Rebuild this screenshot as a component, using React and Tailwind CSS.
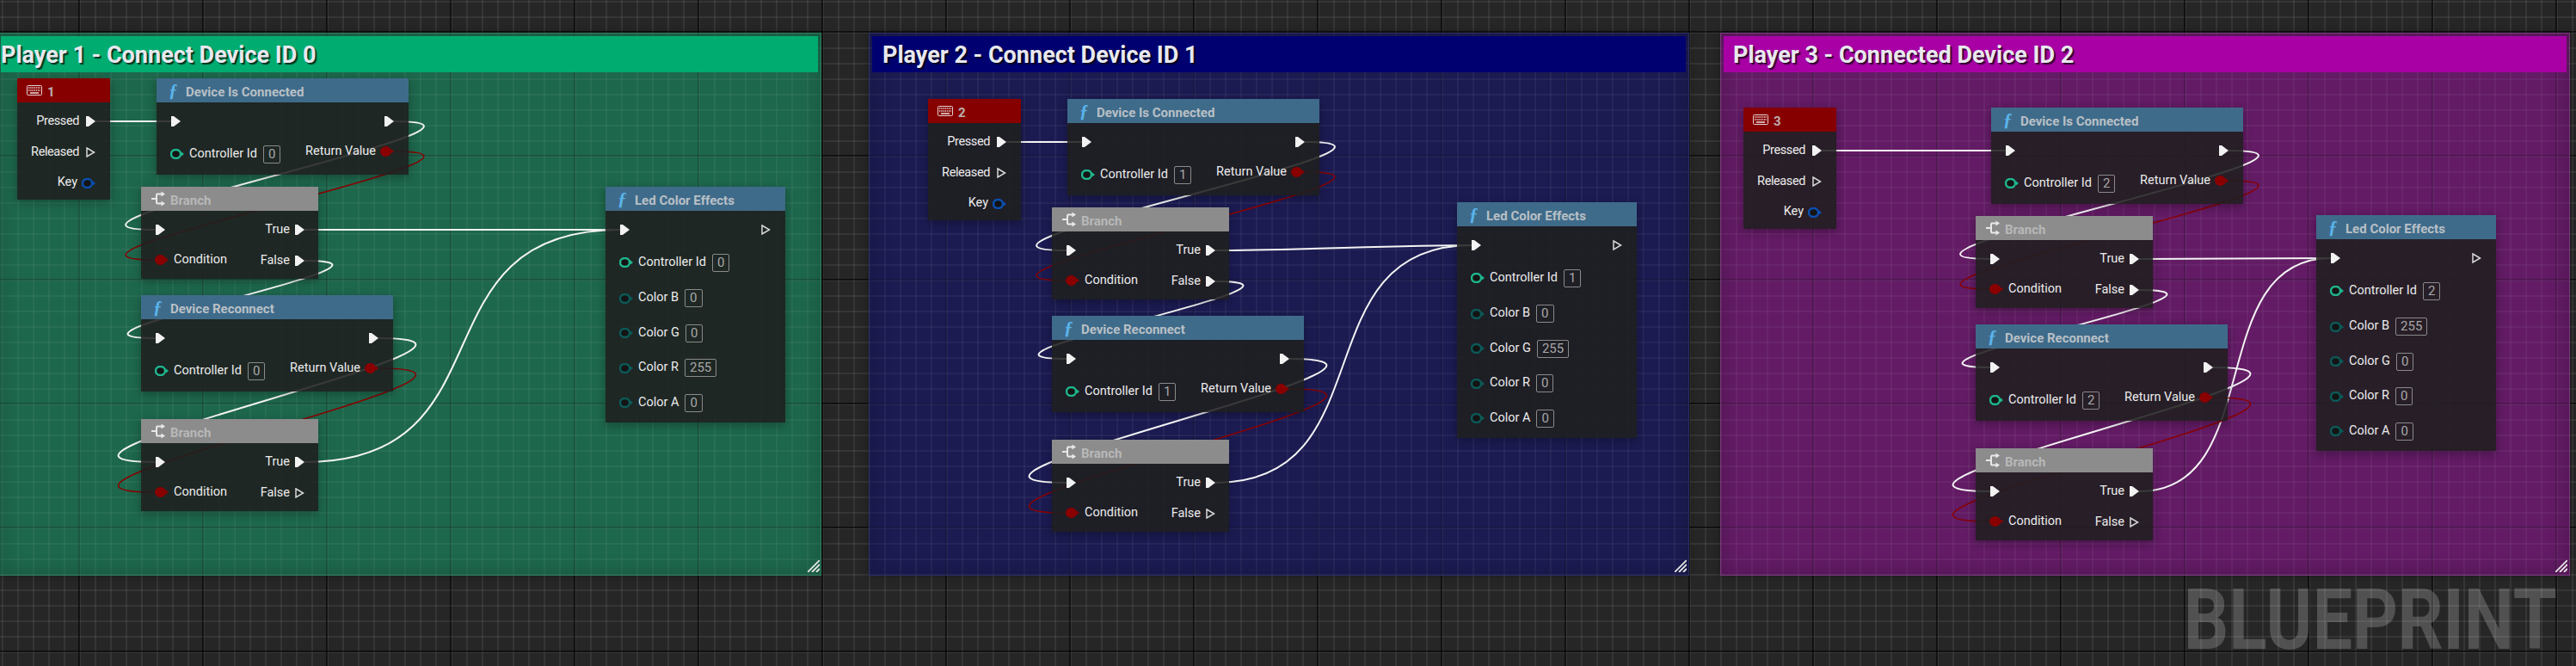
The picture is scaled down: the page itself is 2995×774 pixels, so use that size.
import React from "react";

// grid lines sit on fixed backgrounds so canvas and comment boxes stay lined up
const canvasGrid =
    "bg-fixed bg-[#262626] [background-image:linear-gradient(to_right,rgba(0,0,0,0.6)_2px,transparent_2px),linear-gradient(to_bottom,rgba(0,0,0,0.6)_2px,transparent_2px),linear-gradient(to_right,rgba(255,255,255,0.07)_2px,transparent_2px),linear-gradient(to_bottom,rgba(255,255,255,0.07)_2px,transparent_2px)] [background-size:144px_144px,144px_144px,18px_18px,18px_18px] [background-position:91px_36px,91px_36px,2px_1px,2px_1px]";
const panelGrid =
    "bg-fixed [background-image:linear-gradient(to_right,rgba(0,0,0,0.18)_2px,transparent_2px),linear-gradient(to_bottom,rgba(0,0,0,0.18)_2px,transparent_2px),linear-gradient(to_right,rgba(255,255,255,0.045)_2px,transparent_2px),linear-gradient(to_bottom,rgba(255,255,255,0.045)_2px,transparent_2px)] [background-size:144px_144px,144px_144px,18px_18px,18px_18px] [background-position:91px_36px,91px_36px,2px_1px,2px_1px]";

const graphs = [
    {
        id: 0,
        title: "Player 1 - Connect Device ID 0",
        box: "left-[-3px] w-[958px] bg-[#1d674c] border-[#2f7d61]",
        bar: "bg-[#00ac6f] pl-0",
        key: "1",
        colors: ["0", "0", "255", "0"],
        nodes: { key: [20, 91], dic: [182, 91], b1: [164, 217], dr: [164, 343], b2: [164, 487], led: [704, 217] },
        hatch: [939, 651],
    },
    {
        id: 1,
        title: "Player 2 - Connect Device ID 1",
        box: "left-[1010px] w-[954px] bg-[#1b1b52] border-[#2e2e66]",
        bar: "bg-[#000070] pl-[12px]",
        key: "2",
        colors: ["0", "255", "0", "0"],
        nodes: { key: [1079, 115], dic: [1241, 115], b1: [1223, 241], dr: [1223, 367], b2: [1223, 511], led: [1694, 235] },
        hatch: [1947, 651],
    },
    {
        id: 2,
        title: "Player 3 - Connected Device ID 2",
        box: "left-[2000px] w-[988px] bg-[#621b64] border-[#7a3a7c]",
        bar: "bg-[#a800a5] pl-[11px]",
        key: "3",
        colors: ["255", "0", "0", "0"],
        nodes: { key: [2027, 125], dic: [2315, 125], b1: [2297, 251], dr: [2297, 377], b2: [2297, 521], led: [2693, 250] },
        hatch: [2971, 651],
    },
];

const ExecPin = ({ hollow }) => (
    <svg width="11" height="12" viewBox="0 0 11 12" className="shrink-0">
        {hollow ? (
            <polygon points="1,1 9.5,6 1,11" fill="none" stroke="#d8d8d8" strokeWidth="1.5" />
        ) : (
            <polygon points="0,0 3,0 11,6 3,12 0,12" fill="#f2f2f2" />
        )}
    </svg>
);

const DataPin = ({ color, filled }) => (
    <svg width="16" height="12" viewBox="0 0 16 12" className="shrink-0">
        <polygon points="13,3.5 16,6 13,8.500" fill={color} />
        <ellipse
            cx="6.500"
            cy="6"
            rx={filled ? 6.5 : 5.5}
            ry={filled ? 6 : 5}
            fill={filled ? color : "#141414"}
            stroke={filled ? "none" : color}
            strokeWidth="2.500"
        />
    </svg>
);

const KeyboardIcon = () => (
    <svg width="18" height="12" viewBox="0 0 18 12" className="shrink-0">
        <rect x="0.500" y="0.500" width="17" height="11" rx="1" fill="none" stroke="#e4d4d4" />
        <path d="M2 3h14M2 6h14" stroke="#e4d4d4" strokeWidth="1.600" strokeDasharray="1.400 0.800" />
        <path d="M4 9h10" stroke="#e4d4d4" strokeWidth="1.600" />
    </svg>
);

const BranchIcon = () => (
    <svg width="16" height="18" viewBox="0 0 16 18" className="shrink-0">
        <path d="M0 9h6M6 3.500v11M6 3.500h6M6 14.500h6" fill="none" stroke="#e8e8e8" strokeWidth="2" />
        <path d="M11.500 0.500L16 3.500L11.500 6.500ZM11.500 11.500L16 14.500L11.500 17.500Z" fill="#e8e8e8" />
    </svg>
);

const FuncIcon = () => (
    <span className="w-[20px] shrink-0 font-['Liberation_Serif'] text-[21px] italic leading-none text-[#5ab4ea]">ƒ</span>
);

const ValueBox = ({ value }) => (
    <span className="flex h-[21px] min-w-[20px] items-center justify-center rounded-[2px] border border-[#8a8a8a] px-[5px] text-[15px] leading-none text-[#a8a8a8]">
        {value}
    </span>
);

const Node = ({ pos, width, header, icon, title, titleColor, children }) => (
    <div
        className="absolute z-20 font-['Roboto'] text-[14.500px] leading-none text-[#ececec] shadow-[0_3px_10px_rgba(0,0,0,0.3)]"
        style={{ left: pos[0], top: pos[1], width }}
    >
        <div className={`flex h-[28px] items-center font-bold ${header}`}>
            {icon}
            <span className={`pt-[4px] text-[15px] ${titleColor}`}>{title}</span>
        </div>
        <div className="bg-[rgba(31,31,31,0.88)]">{children}</div>
    </div>
);

const FunctionNode = ({ pos, title, id }) => (
    <Node
        pos={pos}
        width={293}
        header="bg-[#3f6b8a] pl-[14px]"
        icon={<FuncIcon />}
        title={title}
        titleColor="text-[#b9c0c6]"
    >
        <div className="flex h-[44px] items-center justify-between px-[17px]">
            <ExecPin />
            <ExecPin />
        </div>
        <div className="flex h-[32px] items-center justify-between pl-[16px] pr-[17px]">
            <div className="flex items-center">
                <DataPin color="#1fb58c" />
                <span className="ml-[6px]">Controller Id</span>
                <span className="ml-[7px]">
                    <ValueBox value={id} />
                </span>
            </div>
            <div className="mb-[6px] flex items-center gap-[5px]">
                <span>Return Value</span>
                <DataPin color="#8a0000" filled />
            </div>
        </div>
        <div className="h-[8px]" />
    </Node>
);

const BranchNode = ({ pos, falseHollow }) => (
    <Node
        pos={pos}
        width={206}
        header="bg-[#8c8c8c] pl-[12px] gap-[6px]"
        icon={<BranchIcon />}
        title="Branch"
        titleColor="text-[#b8b8b8]"
    >
        <div className="flex h-[44px] items-center justify-between pl-[17px] pr-[16px]">
            <ExecPin />
            <div className="flex items-center gap-[6px]">
                <span>True</span>
                <ExecPin />
            </div>
        </div>
        <div className="flex h-[26px] items-center justify-between pl-[16px] pr-[16px]">
            <div className="flex items-center gap-[6px]">
                <DataPin color="#8a0000" filled />
                <span>Condition</span>
            </div>
            <div className="mt-[2px] flex items-center gap-[6px]">
                <span>False</span>
                <ExecPin hollow={falseHollow} />
            </div>
        </div>
        <div className="h-[9px]" />
    </Node>
);

const KeyNode = ({ pos, label }) => (
    <Node
        pos={pos}
        width={108}
        header="bg-[#870000] pl-[11px] gap-[6px]"
        icon={<KeyboardIcon />}
        title={label}
        titleColor="text-[#bdb0b0]"
    >
        <div className="flex flex-col items-end pt-[4px] pr-[17px]">
            <div className="flex h-[36px] items-center gap-[8px]">
                <span className="tracking-[-0.4px]">Pressed</span>
                <ExecPin />
            </div>
            <div className="flex h-[36px] items-center gap-[8px]">
                <span className="tracking-[-0.4px]">Released</span>
                <ExecPin hollow />
            </div>
            <div className="flex h-[35px] items-center gap-[5px]">
                <span>Key</span>
                <DataPin color="#0b4fb0" />
            </div>
            <div className="h-[2px]" />
        </div>
    </Node>
);

const LedNode = ({ pos, id, colors }) => {
    const rows = [
        { name: "Color B", value: colors[0], height: "h-[41px]" },
        { name: "Color G", value: colors[1], height: "h-[40px]" },
        { name: "Color R", value: colors[2], height: "h-[41px]" },
        { name: "Color A", value: colors[3], height: "h-[40px]" },
    ];
    return (
        <Node
            pos={pos}
            width={209}
            header="bg-[#3f6b8a] pl-[14px]"
            icon={<FuncIcon />}
            title="Led Color Effects"
            titleColor="text-[#b9c0c6]"
        >
            <div className="flex h-[44px] items-center justify-between pl-[17px] pr-[17px]">
                <ExecPin />
                <ExecPin hollow />
            </div>
            <div className="pl-[16px]">
                <div className="mb-[5px] flex h-[32px] items-center">
                    <DataPin color="#1fb58c" />
                    <span className="ml-[6px]">Controller Id</span>
                    <span className="ml-[7px]">
                        <ValueBox value={id} />
                    </span>
                </div>
                {rows.map((row) => (
                    <div key={row.name} className={`flex items-center ${row.height}`}>
                        <DataPin color="#0b5a58" />
                        <span className="ml-[6px]">{row.name}</span>
                        <span className="ml-[7px]">
                            <ValueBox value={row.value} />
                        </span>
                    </div>
                ))}
            </div>
            <div className="h-[3px]" />
        </Node>
    );
};

// spline between two pins, tension is picked per wire
const spline = (a, b, t) => `M${a[0]} ${a[1]}C${a[0] + t} ${a[1]} ${b[0] - t} ${b[1]} ${b[0]} ${b[1]}`;

const Wires = ({ nodes }) => {
    const { key, dic, b1, dr, b2, led } = nodes;
    const at = (n, dx, dy) => [n[0] + dx, n[1] + dy];
    const white = [
        [at(key, 91, 50), at(dic, 17, 50), 60],
        [at(dic, 276, 50), at(b1, 17, 50), 190],
        [at(b1, 190, 50), at(led, 17, 50), 90],
        [at(b1, 190, 86), at(dr, 17, 50), 160],
        [at(dr, 276, 50), at(b2, 17, 50), 220],
        [at(b2, 190, 50), at(led, 17, 50), (led[0] - b2[0] - 173) * 0.67],
    ];
    const red = [
        [at(dic, 276, 85), at(b1, 17, 85), 190],
        [at(dr, 276, 85), at(b2, 17, 85), 220],
    ];
    return (
        <svg className="absolute left-0 top-0 z-10" width="2995" height="774">
            {white.map(([a, b, t], i) => (
                <path key={i} d={spline(a, b, t)} fill="none" stroke="#f4f4f4" strokeWidth="2" />
            ))}
            {red.map(([a, b, t], i) => (
                <path key={i} d={spline(a, b, t)} fill="none" stroke="#8a0000" strokeWidth="1.500" />
            ))}
        </svg>
    );
};

const Hatch = ({ pos }) => (
    <svg className="absolute z-10" style={{ left: pos[0], top: pos[1] }} width="14" height="14" viewBox="0 0 14 14">
        <path d="M0 14L14 0M5 14L14 5M10 14L14 10" stroke="#e6e6e6" strokeWidth="1.800" />
    </svg>
);

const Graph = ({ graph }) => (
    <>
        <div
            className={`absolute top-[38px] h-[631px] border px-[3px] pt-[3px] shadow-[inset_0_0_24px_rgba(0,0,0,0.2),0_0_8px_rgba(0,0,0,0.3)] ${panelGrid} ${graph.box}`}
        >
            <div
                className={`flex h-[42px] items-center whitespace-nowrap pt-[2px] font-['Roboto'] text-[27px] font-bold leading-none text-[#e8e8ee] [text-shadow:2px_2px_1px_rgba(0,0,0,0.7)] ${graph.bar}`}
            >
                {graph.title}
            </div>
        </div>
        <Hatch pos={graph.hatch} />
        <Wires nodes={graph.nodes} />
        <KeyNode pos={graph.nodes.key} label={graph.key} />
        <FunctionNode pos={graph.nodes.dic} title="Device Is Connected" id={graph.id} />
        <BranchNode pos={graph.nodes.b1} />
        <FunctionNode pos={graph.nodes.dr} title="Device Reconnect" id={graph.id} />
        <BranchNode pos={graph.nodes.b2} falseHollow />
        <LedNode pos={graph.nodes.led} id={graph.id} colors={graph.colors} />
    </>
);

export default function App() {
    return (
        <div className={`relative h-[774px] w-[2995px] overflow-hidden ${canvasGrid}`}>
            {graphs.map((graph) => (
                <Graph key={graph.id} graph={graph} />
            ))}
            <div className="absolute right-[22px] top-[672px] z-30 origin-right scale-x-[0.84] font-['Roboto'] text-[98px] font-bold leading-none text-white/20">
                BLUEPRINT
            </div>
        </div>
    );
}
